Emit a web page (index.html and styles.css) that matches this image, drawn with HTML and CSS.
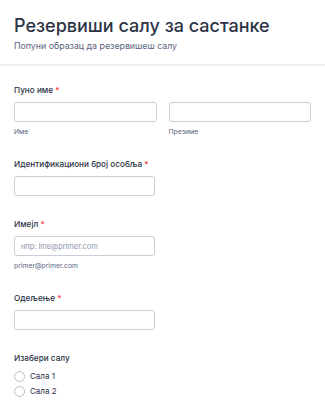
FILE: index.html
```html
<!DOCTYPE html>
<html lang="sr">

<head>
    <meta charset="UTF-8" />
    <meta name="viewport" content="width=device-width, initial-scale=1.0" />
    <title>Резервиши салу</title>
    <link rel="stylesheet" href="styles.css">
</head>

<body>
    <div class="form">
        <div class="header">
            <h1>Резервиши салу за састанке</h1>
            <p class="subtitle">Попуни образац да резервишеш салу</p>
        </div>

        <div class="field">
            <label class="label">Пуно име <span class="req">*</span></label>
            <div class="row">
                <div class="col">
                    <input type="text" class="input">
                    <span class="sublabel">Име</span>
                </div>
                <div class="col">
                    <input type="text" class="input">
                    <span class="sublabel">Презиме</span>
                </div>
            </div>
        </div>

        <div class="field">
            <label class="label">Идентификациони број особља <span class="req">*</span></label>
            <input type="text" class="input half">
        </div>

        <div class="field">
            <label class="label">Имејл <span class="req">*</span></label>
            <input type="text" class="input half" placeholder="нпр: ime@primer.com">
            <span class="sublabel">primer@primer.com</span>
        </div>

        <div class="field">
            <label class="label">Одељење <span class="req">*</span></label>
            <input type="text" class="input half">
        </div>

        <div class="field">
            <label class="label">Изабери салу</label>
            <div class="radios">
                <label class="radio"><span class="circle"></span>Сала 1</label>
                <label class="radio"><span class="circle"></span>Сала 2</label>
            </div>
        </div>
    </div>
</body>

</html>
```

FILE: styles.css
```css
body {
    margin: 0;
    background: #fff;
    font-family: Inter, "Noto Sans", sans-serif;
    color: #2c3345;
}

.header {
    padding: 15px 14px 12px;
    border-bottom: 2px solid #eceef2;
}

h1 {
    margin: 0;
    font-size: 18px;
    font-weight: 500;
    line-height: 22px;
}

.subtitle {
    margin: 3px 0 0;
    font-size: 8.8px;
    color: #57647e;
    line-height: 12px;
}

.field {
    padding: 0 14px;
    margin-top: 22px;
}

.header + .field {
    margin-top: 18px;
}

.label {
    display: block;
    font-size: 8.2px;
    font-weight: 500;
    line-height: 12px;
    margin-bottom: 6px;
}

.req {
    color: #f23a3c;
}

.row {
    display: flex;
    gap: 12px;
}

.col {
    flex: 1;
}

.input {
    display: block;
    box-sizing: border-box;
    width: 100%;
    height: 20px;
    border: 1px solid #c8ceda;
    border-radius: 3px;
    padding: 0 6px;
    font-family: inherit;
    font-size: 7.4px;
    color: #2c3345;
}

.input.half {
    width: 141px;
}

.input::placeholder {
    color: #8d96a8;
}

.sublabel {
    display: block;
    font-size: 6.8px;
    color: #57647e;
    margin-top: 6px;
    line-height: 8px;
}

.radios {
    display: flex;
    flex-direction: column;
    gap: 3px;
}

.radio {
    display: flex;
    align-items: center;
    gap: 5px;
    font-size: 8px;
    line-height: 12px;
}

.circle {
    width: 9px;
    height: 9px;
    border: 1px solid #b8bdc9;
    border-radius: 50%;
}
```
